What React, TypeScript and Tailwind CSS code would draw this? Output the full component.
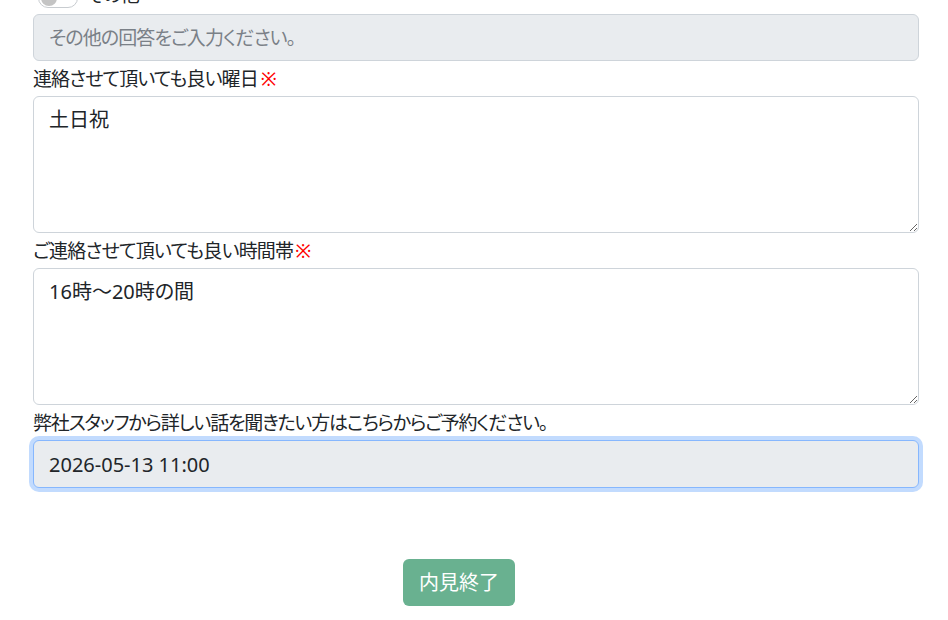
import React from "react";

export default function App() {
  return (
    <div className="w-[948px] h-[620px] overflow-hidden bg-white text-[#212529] text-[20px] leading-[30px] font-['Noto_Sans','Noto_Sans_CJK_JP',sans-serif] [font-feature-settings:'palt']">
      <div className="pl-[33px] pr-[29px]">
        <div className="-mt-[17px] h-[30px] flex items-center mb-[1px]">
          <div className="ml-[5px] w-[40px] h-[20px] rounded-full border border-[#c8ccd0] bg-white flex items-center pl-[2px]">
            <div className="w-[16px] h-[16px] rounded-full bg-[#c4c4c4]" />
          </div>
          <span className="ml-[9px] mb-[6px] text-[19px] tracking-[-0.9px]">その他</span>
        </div>
        <input
          readOnly
          placeholder="その他の回答をご入力ください。"
          className="block w-full h-[47px] px-[15px] rounded-[6px] border border-[#ced4da] bg-[#e9ecef] outline-none text-[19px] tracking-[-0.9px] placeholder:text-[#7a8087]"
        />
        <div className="pt-[3px] pb-[2px] text-[19px] tracking-[-0.9px]">
          連絡させて頂いても良い曜日<span className="text-[#ff0000] ml-[3px]">※</span>
        </div>
        <textarea
          readOnly
          defaultValue="土日祝"
          className="block w-full h-[137px] px-[15px] pt-[8px] pb-[8px] rounded-[6px] border border-[#ced4da] bg-white outline-none resize-y"
        />
        <div className="pt-[3px] pb-[2px] text-[19px] tracking-[-0.8px]">
          ご連絡させて頂いても良い時間帯<span className="text-[#ff0000] ml-[2px]">※</span>
        </div>
        <textarea
          readOnly
          defaultValue="16時～20時の間"
          className="block w-full h-[137px] px-[15px] pt-[8px] pb-[8px] rounded-[6px] border border-[#ced4da] bg-white outline-none resize-y"
        />
        <div className="pt-[3px] pb-[2px] text-[19px] tracking-[-1.2px]">
          弊社スタッフから詳しい話を聞きたい方はこちらからご予約ください。
        </div>
        <input
          readOnly
          value="2026-05-13 11:00"
          className="block w-full h-[48px] px-[15px] rounded-[6px] border border-[#86b7fe] bg-[#e9ecef] outline-none ring-4 ring-[#0d6efd]/25"
        />
        <div className="pt-[71px] pl-[370px]">
          <button className="w-[112px] h-[47px] rounded-[6px] bg-[#69b190] text-white text-[20px] leading-[30px]">
            内見終了
          </button>
        </div>
      </div>
    </div>
  );
}
